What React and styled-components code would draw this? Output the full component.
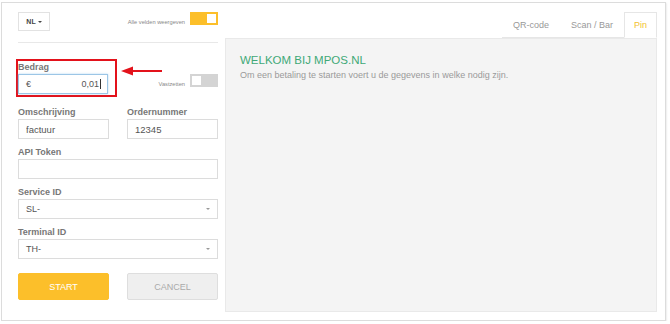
import React from "react";
import styled, { createGlobalStyle } from "styled-components";

const GlobalStyle = createGlobalStyle`
  body {
    margin: 2px 0 0 1px;
    background: #fff;
    font-family: "Liberation Sans", Arial, sans-serif;
  }
`;

export default function App() {
  return (
    <>
      <GlobalStyle />
      <Card>
        {/* left side: the payment form */}
        <Form>
          <TopRow>
            <LangSelect>
              NL <Caret $dark />
            </LangSelect>
            <ShowAll>
              <Tiny>Alle velden weergeven</Tiny>
              <Toggle $on>
                <Knob />
              </Toggle>
            </ShowAll>
          </TopRow>
          <Divider />

          <AmountRow>
            <Highlight>
              <Label>Bedrag</Label>
              <AmountBox>
                <span>€</span>
                <AmountValue>
                  0,01
                  <Cursor />
                </AmountValue>
              </AmountBox>
              {/* annotation arrow pointing at the highlighted field */}
              <Arrow width="42" height="10" viewBox="0 0 42 10">
                <path d="M11 5 H41" stroke="#e3121b" strokeWidth="2" />
                <path d="M0 5 L12 0.5 L12 9.5 Z" fill="#e3121b" />
              </Arrow>
            </Highlight>
            <Lock>
              <Tiny>Vastzetten</Tiny>
              <Toggle>
                <Knob />
              </Toggle>
            </Lock>
          </AmountRow>

          <Fields>
            <Field>
              <Label>Omschrijving</Label>
              <Input defaultValue="factuur" />
            </Field>
            <Field>
              <Label>Ordernummer</Label>
              <Input defaultValue="12345" />
            </Field>
            <Field $wide>
              <Label>API Token</Label>
              <Input defaultValue="" />
            </Field>
            <Field $wide>
              <Label>Service ID</Label>
              <Select>
                SL-
                <Caret />
              </Select>
            </Field>
            <Field $wide>
              <Label>Terminal ID</Label>
              <Select>
                TH-
                <Caret />
              </Select>
            </Field>
          </Fields>

          <Buttons>
            <Button $primary>START</Button>
            <Button>CANCEL</Button>
          </Buttons>
        </Form>

        {/* right side: tabs + welcome panel */}
        <Side>
          <TabBar>
            <Tab>QR-code</Tab>
            <Tab>Scan / Bar</Tab>
            <Tab $active>Pin</Tab>
          </TabBar>
          <Panel>
            <Title>WELKOM BIJ MPOS.NL</Title>
            <Intro>
              Om een betaling te starten voert u de gegevens in welke nodig
              zijn.
            </Intro>
          </Panel>
        </Side>
      </Card>
    </>
  );
}

const Card = styled.div`
  width: 665px;
  height: 319px;
  box-sizing: border-box;
  display: flex;
  gap: 7px;
  padding: 9px 8px 8px 16px;
  background: #fff;
  border: 1px solid #dcdcdc;
  box-shadow: 0 1px 2px rgba(0, 0, 0, 0.18);
`;

const Form = styled.div`
  width: 200px;
  flex-shrink: 0;
  display: flex;
  flex-direction: column;
`;

const TopRow = styled.div`
  display: flex;
  align-items: flex-start;
  height: 19px;
`;

const LangSelect = styled.div`
  width: 32px;
  height: 19px;
  box-sizing: border-box;
  border: 1px solid #e2e2e2;
  display: flex;
  align-items: center;
  justify-content: center;
  gap: 2px;
  font-size: 7px;
  font-weight: bold;
  color: #444;
`;

const Caret = styled.span`
  width: 0;
  height: 0;
  border-left: 2px solid transparent;
  border-right: 2px solid transparent;
  border-top: 2.5px solid ${(p) => (p.$dark ? "#444" : "#999")};
`;

const ShowAll = styled.div`
  margin-left: auto;
  display: flex;
  align-items: flex-start;
  gap: 5px;
`;

const Tiny = styled.span`
  font-size: 5.7px;
  line-height: 7px;
  color: #888;
  margin-top: 7px;
`;

const Toggle = styled.div`
  width: 28px;
  height: 13px;
  box-sizing: border-box;
  padding: 2px;
  display: flex;
  justify-content: ${(p) => (p.$on ? "flex-end" : "flex-start")};
  background: ${(p) => (p.$on ? "#fcbf2a" : "#d4d4d4")};
`;

const Knob = styled.div`
  width: 9px;
  height: 9px;
  background: #fff;
`;

const Divider = styled.div`
  height: 1px;
  margin-top: 11px;
  background: #e8e8e8;
`;

const AmountRow = styled.div`
  display: flex;
  align-items: flex-start;
  margin-top: 16px;
`;

const Highlight = styled.div`
  position: relative;
  flex-shrink: 0;
  width: 97px;
  margin-left: -2px;
  padding: 0 0 1px 0;
  border: 2px solid #e3121b;
`;

const Arrow = styled.svg`
  position: absolute;
  top: 5px;
  left: calc(100% + 6px);
`;

const Label = styled.label`
  display: block;
  font-size: 9px;
  font-weight: bold;
  line-height: 12px;
  margin-bottom: 1px;
  color: #777;
`;

const AmountBox = styled.div`
  width: 90px;
  height: 20px;
  box-sizing: border-box;
  padding: 0 6px 0 7px;
  display: flex;
  align-items: center;
  justify-content: space-between;
  border: 1px solid #9cc6e6;
  box-shadow: 0 0 2px rgba(102, 175, 233, 0.5);
  font-size: 9px;
  color: #555;
`;

const AmountValue = styled.span`
  display: flex;
  align-items: center;
`;

const Cursor = styled.span`
  width: 1px;
  height: 10px;
  margin-left: 1px;
  background: #333;
`;

const Lock = styled.div`
  margin: 15px 0 0 auto;
  display: flex;
  align-items: flex-start;
  gap: 5px;
`;

const Fields = styled.div`
  display: grid;
  grid-template-columns: 1fr 1fr;
  column-gap: 18px;
  row-gap: 7px;
  margin-top: 9px;
`;

const Field = styled.div`
  display: flex;
  flex-direction: column;
  grid-column: ${(p) => (p.$wide ? "1 / -1" : "auto")};
`;

const Input = styled.input`
  width: 100%;
  height: 20px;
  box-sizing: border-box;
  margin: 0;
  padding: 0 7px;
  border: 1px solid #dcdcdc;
  border-radius: 0;
  outline: none;
  font-family: inherit;
  font-size: 9.5px;
  color: #555;
`;

const Select = styled.div`
  height: 20px;
  box-sizing: border-box;
  padding: 0 7px;
  display: flex;
  align-items: center;
  justify-content: space-between;
  border: 1px solid #dcdcdc;
  font-size: 9px;
  color: #555;
`;

const Buttons = styled.div`
  display: grid;
  grid-template-columns: 1fr 1fr;
  column-gap: 18px;
  margin-top: 14px;
`;

const Button = styled.button`
  height: 27px;
  box-sizing: border-box;
  border-radius: 2px;
  border: 1px solid ${(p) => (p.$primary ? "#fcbf2a" : "#dedede")};
  background: ${(p) => (p.$primary ? "#fcbf2a" : "#efefef")};
  color: ${(p) => (p.$primary ? "#fff" : "#aaa")};
  font-family: inherit;
  font-size: 9px;
  padding: 0;
`;

const Side = styled.div`
  flex: 1;
  display: flex;
  flex-direction: column;
`;

const TabBar = styled.div`
  align-self: flex-end;
  display: flex;
  box-shadow: inset 0 -1px 0 #e6e6e6;
`;

const Tab = styled.div`
  height: 26px;
  box-sizing: border-box;
  padding: 0 ${(p) => (p.$active ? "9px" : "10px")};
  line-height: 24px;
  font-size: 9px;
  border: 1px solid ${(p) => (p.$active ? "#e6e6e6" : "transparent")};
  border-bottom-color: ${(p) => (p.$active ? "#fff" : "transparent")};
  background: ${(p) => (p.$active ? "#fff" : "transparent")};
  color: ${(p) => (p.$active ? "#f2bf2e" : "#999")};
`;

const Panel = styled.div`
  flex: 1;
  padding: 14px 14px;
  background: #f4f4f4;
  border: 1px solid #e9e9e9;
`;

const Title = styled.h1`
  margin: 0 0 1px;
  font-size: 11.5px;
  line-height: 15px;
  font-weight: normal;
  color: #3fa977;
`;

const Intro = styled.p`
  margin: 0;
  font-size: 9px;
  line-height: 13px;
  color: #9a9a9a;
`;
